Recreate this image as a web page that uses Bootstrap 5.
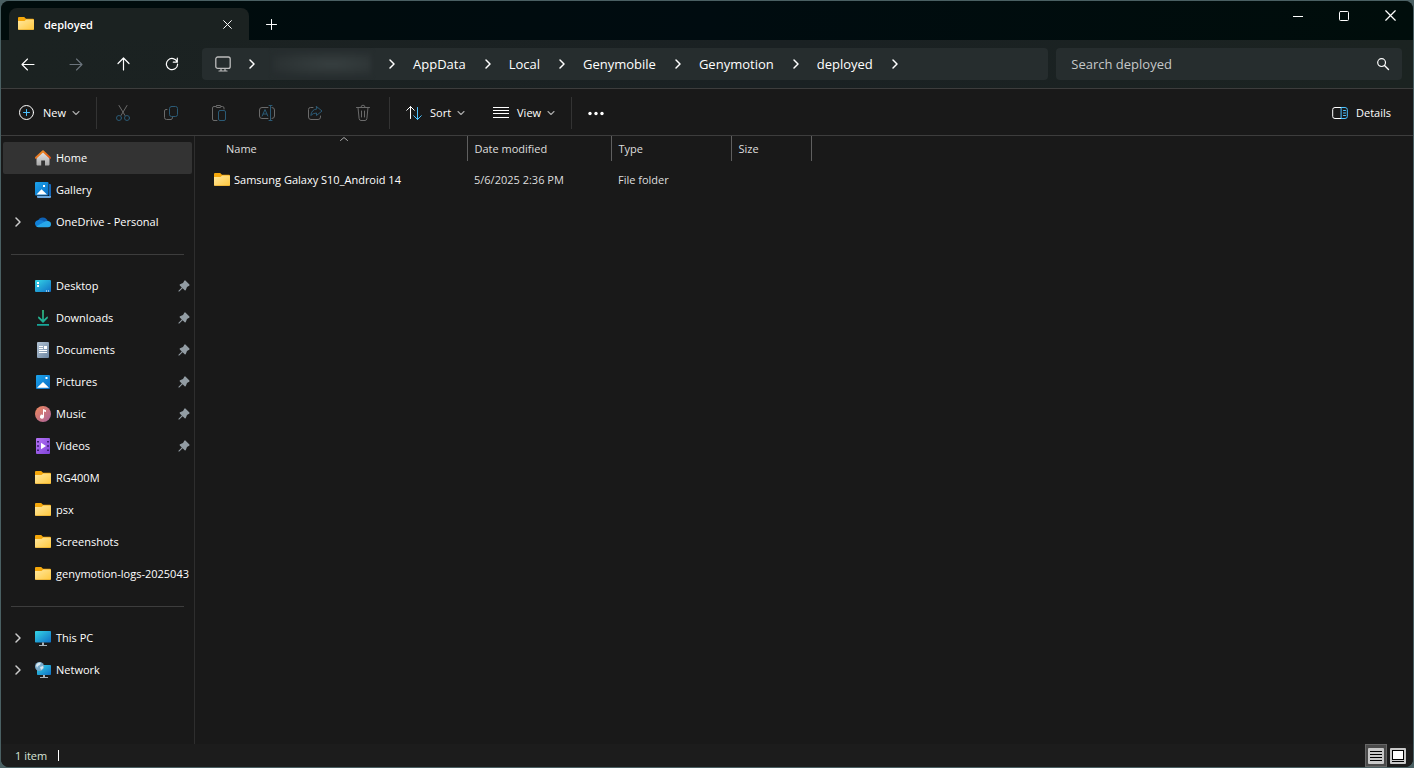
<!DOCTYPE html>
<html lang="en" data-bs-theme="dark">
<head>
<meta charset="utf-8">
<meta name="viewport" content="width=device-width, initial-scale=1">
<title>deployed</title>
<link href="https://cdn.jsdelivr.net/npm/bootstrap@5.3.0/dist/css/bootstrap.min.css" rel="stylesheet">
<style>
:root{--accent:#4cc2ff;--line:#3d3d3d;--field:#262d2e}
body{font-family:"Open Sans","Noto Sans",sans-serif;font-size:11px;line-height:16px;color:#fff;background:#4a6063;min-height:100vh;padding:1px}
svg{display:block;flex:none;fill:none;stroke:currentColor;stroke-linecap:round;stroke-linejoin:round}
a{color:inherit;text-decoration:none}
.explorer{background:#191919;border-radius:8px;overflow:hidden}
.titlebar{background:linear-gradient(90deg,#000c0c,#000c10 50%,#000d0b);height:39px;padding-left:8px}
.tab-item{width:240px;height:32px;margin-top:7px;background:#1b2221;border-radius:8px 8px 0 0;padding:0 13px 0 9px}
.tab-title{margin-left:10px;padding-top:2px}
.plain{background:none;border:0;padding:0;color:inherit;display:flex;align-items:center;justify-content:center}
.win-btn{width:46px;height:29px}
.navrow{background:linear-gradient(90deg,#1b2221,#1a2123 55%,#1b2321);height:48px;padding:0 11px 0 3px}
.nav-btn{width:48px;height:32px}
.fields{display:grid;grid-template-columns:71fr 29fr;gap:8px;margin-left:6px}
.field-box{background:var(--field);border-radius:4px;height:32px}
.crumbs{font-size:13px;line-height:20px;gap:14px;padding-left:13px}
.crumbs li{gap:14px}
.crumbs a{padding-right:1px}
.masked{width:98px;height:24px;background:radial-gradient(ellipse at 60% 50%,#373f40,#2c3334 60%,#252b2d);filter:blur(2px)}
.search-input,.search-input:focus{background:none;border:0;box-shadow:none;font-size:13px;line-height:20px;padding:0 0 0 15px;color:#fff}
.search-input::placeholder{color:#c5c8c8;opacity:1}
.toolbar-row{border-top:1px solid var(--line);border-bottom:1px solid var(--line);height:48px;padding:2px 22px 0 18px}
.toolbar-row .caption-text{margin:0 6px 0 8px}
.toolbar-row .caption-text:last-child{margin-right:0}
.sep{width:1px;height:32px;background:#333;margin:0 16px}
.tools{margin:0 -14px}
.tool{width:48px;height:32px;color:#6b6b6b}
.hue{stroke:var(--accent)}
.tool .hue{stroke:#2b5a75}
.side{width:194px;border-right:1px solid #2e2e2e;padding:6px 2px 0 2px}
.side-link{height:32px;gap:5px;padding-left:9px;border-radius:2px;overflow:hidden;white-space:nowrap}
.side-link.active{background:#333}
.side-link .twisty{width:18px;flex:none}
.side-link.pinned{padding-right:2px}
.side hr{margin:16px 8px 15px;border-top:1px solid #3d3d3d;opacity:1}
.side-link svg,.filled{stroke:none}
.side-link .twisty svg{stroke:#ccc;margin-left:-1px}
.files{table-layout:fixed;width:100%;color:#dedede}
.files th{font-weight:400;height:25px;padding:0 0 0 7px;border-right:1px solid #5f5f5f;position:relative}
.files th:last-child{border:0}
.files th:first-child{padding-left:31px}
.files td{height:24px;padding:0 0 0 7px}
.files td:first-child{padding-left:19px;color:#fff}
.files tbody::before{content:"";display:block;height:7px}
.sort-mark{position:absolute;top:0;left:144px}
.statusbar{background:#1c1c1c;height:23px;padding:0 4px 0 14px;color:#d8e4d8}
.caret-mark{width:1px;height:11px;background:#fff;margin-left:11px}
.view-btn{width:22px;height:23px}
.view-btn.on{background:#4a4a4a;border:1px solid #666}
</style>
</head>
<body class="d-flex flex-column">
<svg width="0" height="0" class="position-absolute" aria-hidden="true">
<defs>
<linearGradient id="gFolder" x1="0" y1="0" x2="1" y2="1"><stop stop-color="#ffe8a0"/><stop offset="1" stop-color="#ffc83d"/></linearGradient>
<linearGradient id="gBlue" x1="0" y1="0" x2="1" y2="1"><stop stop-color="#1ba4ec"/><stop offset="1" stop-color="#0a6cc4"/></linearGradient>
<linearGradient id="gTeal" x1="0" y1="0" x2="1" y2="1"><stop stop-color="#35d6e6"/><stop offset="1" stop-color="#0f6fc6"/></linearGradient>
<linearGradient id="gHome" x1="0" y1="0" x2="0" y2="1"><stop stop-color="#e8e8e8"/><stop offset="1" stop-color="#a8a8a8"/></linearGradient>
<linearGradient id="gRoof" x1="0" y1="0" x2="1" y2="1"><stop stop-color="#f59a2c"/><stop offset="1" stop-color="#d94f14"/></linearGradient>
<linearGradient id="gDoc" x1="0" y1="0" x2="1" y2="1"><stop stop-color="#b4c4d4"/><stop offset="1" stop-color="#6d86a2"/></linearGradient>
<linearGradient id="gMusic" x1="0" y1="0" x2="1" y2="1"><stop stop-color="#f08a5c"/><stop offset="1" stop-color="#a7609c"/></linearGradient>
<linearGradient id="gVideo" x1="0" y1="0" x2="1" y2="1"><stop stop-color="#b573f5"/><stop offset="1" stop-color="#7f43d8"/></linearGradient>
<linearGradient id="gDown" x1="0" y1="0" x2="0" y2="1"><stop stop-color="#34c98a"/><stop offset="1" stop-color="#15a39a"/></linearGradient>
<symbol id="folder" viewBox="0 0 16 16"><path fill="#f5a70a" d="M0 2Q0 1 1 1h5.2L8 2.7h7q1 0 1 1V8H0z"/><path fill="url(#gFolder)" d="M0 5h6.5L8.2 3.5H15q1 0 1 1V13q0 1-1 1H1q-1 0-1-1z"/><path fill="#e0a020" d="M0 13q0 .5 1 .5h14q1 0 1-.5 0 1-1 1H1q-1 0-1-1z"/></symbol>
<symbol id="chev" viewBox="0 0 14 14"><path d="M5 3l4 4-4 4" stroke-width="1.5"/></symbol>
<symbol id="down" viewBox="0 0 8 8"><path d="M1 2.5l3 3 3-3" stroke="#aaa" stroke-width="1.1"/></symbol>
<symbol id="pin" viewBox="0 0 12 12"><path fill="#929ca3" d="M7.4.6l4 4q.5.8-.3 1.200L9 7 7.800 10q-.4.800-1.100.2L4.600 8.200 1.300 11.500.4 11.600l.1-.9L3.800 7.400 1.800 5.400q-.5-.7.2-1.100l3-1.200L6.200.9Q6.800 0 7.400.6z"/></symbol>
<symbol id="xmark" viewBox="0 0 10 10"><path d="M.7.7l8.600 8.600M9.300.7L.7 9.300" stroke-width="1.1"/></symbol>
</defs></svg>

<div class="explorer d-flex flex-column flex-grow-1">
<header>
 <div class="titlebar d-flex">
  <div class="tab-item d-flex align-items-center">
   <svg class="filled" width="16" height="16"><use href="#folder"/></svg>
   <span class="tab-title fw-semibold flex-grow-1">deployed</span>
   <button class="plain p-1" aria-label="Close tab"><svg width="9" height="9"><use href="#xmark"/></svg></button>
  </div>
  <button class="plain mt-2 ms-2 px-2" aria-label="New tab"><svg width="13" height="13" viewBox="0 0 13 13"><path d="M6.500 1.500v10M1.500 6.500h10"/></svg></button>
  <div class="ms-auto d-flex">
   <button class="plain win-btn" aria-label="Minimize"><svg width="10" height="10" viewBox="0 0 10 10"><path d="M0 5.500h10" stroke-linecap="butt"/></svg></button>
   <button class="plain win-btn" aria-label="Maximize"><svg width="10" height="10" viewBox="0 0 10 10"><rect x=".5" y=".5" width="9" height="9" rx="1"/></svg></button>
   <button class="plain win-btn" aria-label="Close"><svg width="11" height="11"><use href="#xmark"/></svg></button>
  </div>
 </div>
 <div class="navrow d-flex align-items-center">
  <button class="plain nav-btn" aria-label="Back"><svg width="14" height="13" viewBox="0 0 14 13"><path d="M1 6.500h12M6.500 1L1 6.500 6.500 12" stroke-width="1.100"/></svg></button>
  <button class="plain nav-btn text-secondary" aria-label="Forward"><svg width="14" height="13" viewBox="0 0 14 13"><path d="M1 6.500h12M7.500 1L13 6.500 7.500 12" stroke-width="1.100"/></svg></button>
  <button class="plain nav-btn" aria-label="Up"><svg width="14" height="14" viewBox="0 0 14 14"><path d="M6.500 13V1M1 6.500L6.500 1 12 6.500" stroke-width="1.200"/></svg></button>
  <button class="plain nav-btn" aria-label="Refresh"><svg width="14" height="14" viewBox="0 0 14 14"><path d="M12.200 5A5.600 5.600 0 1 0 12.600 7.200M12.300 1.200v4h-4" stroke-width="1.200"/></svg></button>
  <div class="fields flex-grow-1">
   <nav class="field-box d-flex" aria-label="Path">
    <ol class="crumbs list-unstyled d-flex align-items-center mb-0">
     <li class="d-flex align-items-center"><svg width="16" height="16" viewBox="0 0 16 16"><g stroke="#bcbcbc"><rect x=".8" y="1" width="14.400" height="11.400" rx="2" stroke-width="1.300"/><path d="M6 12.500v2M10 12.500v2M4 15h8" stroke-width="1.200"/></g></svg><svg width="14" height="14"><use href="#chev"/></svg></li>
     <li class="d-flex align-items-center"><span class="masked"></span><svg width="14" height="14"><use href="#chev"/></svg></li>
     <li class="d-flex align-items-center"><a href="#">AppData</a><svg width="14" height="14"><use href="#chev"/></svg></li>
     <li class="d-flex align-items-center"><a href="#">Local</a><svg width="14" height="14"><use href="#chev"/></svg></li>
     <li class="d-flex align-items-center"><a href="#">Genymobile</a><svg width="14" height="14"><use href="#chev"/></svg></li>
     <li class="d-flex align-items-center"><a href="#">Genymotion</a><svg width="14" height="14"><use href="#chev"/></svg></li>
     <li class="d-flex align-items-center"><a href="#">deployed</a><svg width="14" height="14"><use href="#chev"/></svg></li>
    </ol>
   </nav>
   <div class="field-box d-flex align-items-center pe-2">
    <input class="form-control search-input" type="search" placeholder="Search deployed" aria-label="Search deployed">
    <button class="plain px-1" aria-label="Search"><svg width="14" height="14" viewBox="0 0 14 14"><circle cx="5.600" cy="5.600" r="3.900" stroke-width="1.200"/><path d="M8.500 8.500l4 4" stroke-width="1.400"/></svg></button>
   </div>
  </div>
 </div>
 <div class="toolbar-row d-flex align-items-center">
  <button class="plain"><svg width="16" height="16" viewBox="0 0 16 16"><circle cx="7.500" cy="7.500" r="7"/><path class="hue" d="M7.500 4.500v6M4.500 7.500h6"/></svg><span class="caption-text">New</span><svg width="8" height="8"><use href="#down"/></svg></button>
  <span class="sep"></span>
  <div class="d-flex tools">
   <button class="plain tool" aria-label="Cut"><svg width="16" height="18" viewBox="0 0 16 18"><path d="M4 1.500l6 10M12 1.500l-6 10"/><circle class="hue" cx="4" cy="14" r="2.500"/><circle class="hue" cx="12" cy="14" r="2.500"/></svg></button>
   <button class="plain tool" aria-label="Copy"><svg width="16" height="16" viewBox="0 0 16 16"><path d="M4 4.500H3Q1.500 4.500 1.500 6v6.500q0 2 2 2H8q1.500 0 1.500-2"/><rect class="hue" x="6.500" y="1.500" width="8" height="10" rx="2"/></svg></button>
   <button class="plain tool" aria-label="Paste"><svg width="16" height="18" viewBox="0 0 16 18"><path d="M5 2.500H3Q1.500 2.500 1.500 4v11q0 1.500 1.500 1.500h3M10 2.500h1.500Q13 2.500 13 4v1"/><rect x="5" y="1.500" width="5" height="2" rx="1"/><rect class="hue" x="7.500" y="6.500" width="7" height="10" rx="1.500"/></svg></button>
   <button class="plain tool" aria-label="Rename"><svg width="16" height="16" viewBox="0 0 16 16"><path d="M9 2.500H3q-2.500 0-2.500 2.500v6q0 2.500 2.500 2.500h6M13 2.500q2.500 0 2.500 2.500v6q0 2.500-2.500 2.500"/><path class="hue" d="M3.200 11L6 4.500 8.800 11M4.200 9h3.600M11.500.7v14.600M10 .5h3M10 15.500h3"/></svg></button>
   <button class="plain tool" aria-label="Share"><svg width="16" height="16" viewBox="0 0 16 16"><path d="M6 2.500H3.500q-2 0-2 2V12q0 2.500 2.500 2.500h7q2.500 0 2.500-2.500v-1"/><path class="hue" d="M9.500 1.500L15 6l-5.500 4.500V8Q6 8 3.800 10.500 4.500 4.500 9.500 4z"/></svg></button>
   <button class="plain tool" aria-label="Delete"><svg width="16" height="18" viewBox="0 0 16 18"><path d="M1.500 3.500h13M3 3.500l1.100 11q.2 2 1.900 2h4q1.700 0 1.900-2L13 3.500M6 3Q6 1.200 8 1.200T10 3M6.500 7v6M9.500 7v6"/></svg></button>
  </div>
  <span class="sep"></span>
  <button class="plain"><svg width="16" height="16" viewBox="0 0 16 16"><path d="M4.500 13.500v-12M.7 5.300l3.800-3.800 3.800 3.800"/><path class="hue" d="M11.500 2.500v12M7.700 10.700l3.800 3.800 3.800-3.800"/></svg><span class="caption-text">Sort</span><svg width="8" height="8"><use href="#down"/></svg></button>
  <button class="plain ms-4 ps-1"><svg width="16" height="16" viewBox="0 0 16 16" stroke-linecap="butt"><path d="M0 2.500h16M0 5.500h16M0 8.500h16M0 12.500h16"/></svg><span class="caption-text">View</span><svg width="8" height="8"><use href="#down"/></svg></button>
  <span class="sep"></span>
  <button class="plain" aria-label="More"><svg class="filled" width="16" height="16" viewBox="0 0 16 16"><g fill="#fff"><circle cx="2" cy="8.500" r="1.700"/><circle cx="8" cy="8.500" r="1.700"/><circle cx="14" cy="8.500" r="1.700"/></g></svg></button>
  <button class="plain ms-auto"><svg width="16" height="14" viewBox="0 0 16 14"><path d="M9.500 1.500H3q-2.300 0-2.300 2v7q0 2 2.300 2h6.500"/><path class="hue" d="M9.500 1.500H13q2.300 0 2.300 2v7q0 2-2.300 2H9.500zM11.500 4.500h2M11.500 7h2M11.500 9.500h2"/></svg><span class="caption-text">Details</span></button>
 </div>
</header>
<div class="d-flex flex-grow-1">
 <aside class="side flex-shrink-0">
  <nav>
   <a href="#" class="side-link d-flex align-items-center active"><span class="twisty"></span><svg width="16" height="16" viewBox="0 0 16 16"><path fill="url(#gHome)" d="M1.500 7L8 1.500 14.500 7v7.500q0 1-1 1H10v-5H6.200v5H2.500q-1 0-1-1z"/><path d="M.9 7.800L8 1.300l7.100 6.500" stroke="url(#gRoof)" stroke-width="1.900"/></svg><span>Home</span></a>
   <a href="#" class="side-link d-flex align-items-center"><span class="twisty"></span><svg width="16" height="16" viewBox="0 0 16 16"><path fill="#1668b8" d="M14 2h1q1 0 1 1v12H14z"/><path fill="#6aa6dd" d="M2 14h14v1q0 1-1 1H3q-1 0-1-1z"/><rect width="13.500" height="13.500" rx="1" fill="url(#gBlue)"/><path fill="#fff" d="M1.500 12.500L6.500 7.300l5.500 5.200zM8 3h2v2H8z"/></svg><span>Gallery</span></a>
   <a href="#" class="side-link d-flex align-items-center"><span class="twisty"><svg width="14" height="14"><use href="#chev"/></svg></span><svg width="16" height="16" viewBox="0 0 16 16"><path fill="#0f62b5" d="M3 6.500a5.300 5.300 0 0 1 9.700.3L8 10z"/><path fill="#1180d8" d="M3.500 6Q0 6.500 0 9.500 0 11.500 1.500 12.500L10 8Q7 5.500 3.500 6z"/><path fill="#28a8ea" d="M1.200 12.300L9 8q2-1.500 4.200-1Q16 7.500 16 10.200 16 13 13 13.200H3.500Q2 13.200 1.200 12.300z"/></svg><span>OneDrive - Personal</span></a>
   <hr>
   <a href="#" class="side-link pinned d-flex align-items-center"><span class="twisty"></span><svg width="16" height="16" viewBox="0 0 16 16"><rect y="2" width="16" height="12" rx="1" fill="url(#gTeal)"/><path fill="#fff" d="M2 4h2v2H2zM2 7h2v2H2zM11 12.500h1v1h-1zM13 12.500h1v1h-1z"/></svg><span class="flex-grow-1">Desktop</span><svg width="12" height="12"><use href="#pin"/></svg></a>
   <a href="#" class="side-link pinned d-flex align-items-center"><span class="twisty"></span><svg width="16" height="16" viewBox="0 0 16 16"><path fill="url(#gDown)" d="M7.200 0h1.600v9.600l3.600-3.300L13 8l-5 5L3 8l.6-1.700 3.600 3.300zM2 14h12v1.800H2z"/></svg><span class="flex-grow-1">Downloads</span><svg width="12" height="12"><use href="#pin"/></svg></a>
   <a href="#" class="side-link pinned d-flex align-items-center"><span class="twisty"></span><svg width="16" height="16" viewBox="0 0 16 16"><rect x="2" width="12" height="16" rx="1" fill="url(#gDoc)"/><path fill="#fff" d="M4 4h4v1H4zM4 6h4v1H4zM9 4h3v3H9zM4 8h8v1H4zM4 10h8v1H4z"/></svg><span class="flex-grow-1">Documents</span><svg width="12" height="12"><use href="#pin"/></svg></a>
   <a href="#" class="side-link pinned d-flex align-items-center"><span class="twisty"></span><svg width="16" height="16" viewBox="0 0 16 16"><rect x="1" y="1" width="14" height="14" rx="1" fill="url(#gBlue)"/><path fill="#fff" d="M2 13.700L8 8l6 5.700zM10.500 3h2v2h-2z"/></svg><span class="flex-grow-1">Pictures</span><svg width="12" height="12"><use href="#pin"/></svg></a>
   <a href="#" class="side-link pinned d-flex align-items-center"><span class="twisty"></span><svg width="16" height="16" viewBox="0 0 16 16"><circle cx="8" cy="8" r="8" fill="url(#gMusic)"/><path fill="#fff" d="M8 3l3 1.200v1.900L9 5.500v5.300a2 2 0 1 1-1-1.800z"/></svg><span class="flex-grow-1">Music</span><svg width="12" height="12"><use href="#pin"/></svg></a>
   <a href="#" class="side-link pinned d-flex align-items-center"><span class="twisty"></span><svg width="16" height="16" viewBox="0 0 16 16"><rect x="1" width="14" height="16" rx="1" fill="url(#gVideo)"/><path fill="#3d1f74" d="M2 3h2v1.500H2zM2 7.200h2v1.500H2zM2 11.500h2V13H2zM12 3h2v1.500h-2zM12 7.200h2v1.500h-2zM12 11.500h2V13h-2z"/><path fill="#fff" d="M6 4.800L11 8l-5 3.200z"/></svg><span class="flex-grow-1">Videos</span><svg width="12" height="12"><use href="#pin"/></svg></a>
   <a href="#" class="side-link d-flex align-items-center"><span class="twisty"></span><svg width="16" height="16"><use href="#folder"/></svg><span>RG400M</span></a>
   <a href="#" class="side-link d-flex align-items-center"><span class="twisty"></span><svg width="16" height="16"><use href="#folder"/></svg><span>psx</span></a>
   <a href="#" class="side-link d-flex align-items-center"><span class="twisty"></span><svg width="16" height="16"><use href="#folder"/></svg><span>Screenshots</span></a>
   <a href="#" class="side-link d-flex align-items-center"><span class="twisty"></span><svg width="16" height="16"><use href="#folder"/></svg><span>genymotion-logs-2025043</span></a>
   <hr>
   <a href="#" class="side-link d-flex align-items-center"><span class="twisty"><svg width="14" height="14"><use href="#chev"/></svg></span><svg width="16" height="16" viewBox="0 0 16 16"><rect y="1" width="16" height="11.500" rx=".8" fill="url(#gTeal)"/><path fill="#a9b4bc" d="M7 12.500h2V15h3v1H4v-1h3z"/></svg><span>This PC</span></a>
   <a href="#" class="side-link d-flex align-items-center"><span class="twisty"><svg width="14" height="14"><use href="#chev"/></svg></span><svg width="16" height="16" viewBox="0 0 16 16"><rect x="2" y="3" width="14" height="10" rx=".8" fill="url(#gTeal)"/><path fill="#a9b4bc" d="M8 13h2v2h3v1H5v-1h3z"/><circle cx="4.500" cy="4.500" r="4.500" fill="#78a9c9"/><path fill="#d5e7f0" d="M1 3Q3 0 6 .7L5 3 3 4 2 6zM5 5l3-1 .5 2L6 8z"/></svg><span>Network</span></a>
  </nav>
 </aside>
 <main class="flex-grow-1">
  <table class="files">
   <colgroup><col style="width:272px"><col style="width:144px"><col style="width:120px"><col style="width:80px"><col></colgroup>
   <thead><tr><th scope="col">Name<svg class="sort-mark" width="10" height="6" viewBox="0 0 10 6"><path d="M1.500 4.500l3.500-3 3.500 3" stroke="#aaa"/></svg></th><th scope="col">Date modified</th><th scope="col">Type</th><th scope="col">Size</th><th></th></tr></thead>
   <tbody><tr><td><a href="#" class="d-flex align-items-center gap-1"><svg class="filled" width="16" height="16"><use href="#folder"/></svg>Samsung Galaxy S10_Android 14</a></td><td>5/6/2025 2:36 PM</td><td>File folder</td><td></td><td></td></tr></tbody>
  </table>
 </main>
</div>
<footer class="statusbar d-flex align-items-center">
 <span>1 item</span><span class="caret-mark"></span>
 <div class="ms-auto d-flex">
  <button class="plain view-btn on" aria-label="Details view"><svg class="filled" width="16" height="16" viewBox="0 0 16 16"><rect width="16" height="16" rx="1" fill="#c8c8c8"/><path fill="#000" d="M2 3h12v1H2zM2 6h12v1H2zM2 9h12v1H2zM2 12h12v1H2z"/></svg></button>
  <button class="plain view-btn" aria-label="Large icons view"><svg class="filled" width="16" height="16" viewBox="0 0 16 16"><rect width="16" height="16" rx="1" fill="#c8c8c8"/><path fill="#000" d="M2 2h12v10H2zM2 13h12v1H2z"/><path fill="#fff" d="M3 3h10v8H3z"/></svg></button>
 </div>
</footer>
</div>
<script src="https://cdn.jsdelivr.net/npm/bootstrap@5.3.0/dist/js/bootstrap.bundle.min.js"></script>
</body>
</html>
